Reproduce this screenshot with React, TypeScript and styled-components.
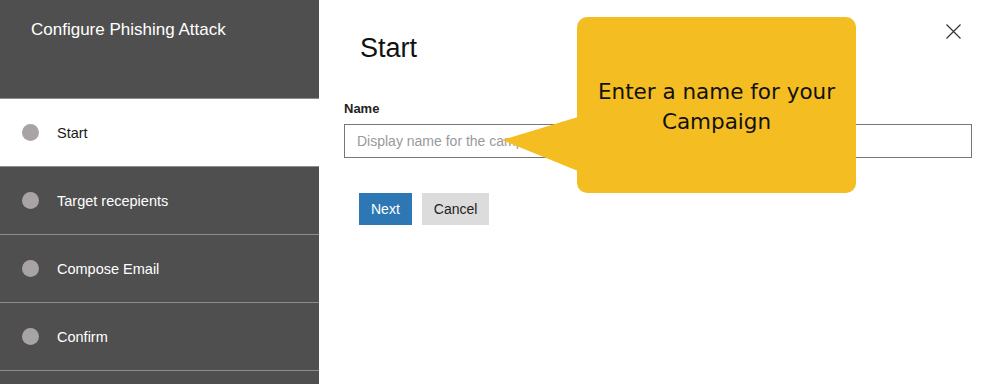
import React from "react";
import styled, { createGlobalStyle } from "styled-components";

const Global = createGlobalStyle`
  html, body { margin: 0; padding: 0; background: #ffffff; }
  body { font-family: "Liberation Sans", Arial, sans-serif; }
  * { box-sizing: border-box; }
`;

const Page = styled.div`
  position: relative;
  width: 981px;
  height: 384px;
  display: flex;
  overflow: hidden;
`;

const Sidebar = styled.aside`
  width: 319px;
  flex: none;
  background: #4f4f4f;
  display: flex;
  flex-direction: column;
  overflow: hidden;
`;

const SideHeader = styled.div`
  flex: none;
  height: 98px;
  padding: 20px 0 0 31px;
  color: #ffffff;
  font-size: 17px;
`;

const Step = styled.div<{ $active?: boolean }>`
  flex: none;
  height: 68px;
  border-top: 1px solid #8c8c8c;
  display: flex;
  align-items: center;
  padding-left: 22px;
  gap: 18px;
  background: ${(p) => (p.$active ? "#ffffff" : "transparent")};
  color: ${(p) => (p.$active ? "#1a1a1a" : "#ffffff")};
  font-size: 14.5px;
`;

const Dot = styled.span`
  width: 17px;
  height: 17px;
  border-radius: 50%;
  background: #a8a4a5;
  flex: none;
`;

const Main = styled.main`
  flex: 1;
  padding: 33px 9px 0 25px;
  display: flex;
  flex-direction: column;
`;

const TopRow = styled.div`
  display: flex;
  justify-content: space-between;
  align-items: flex-start;
`;

const Heading = styled.h1`
  margin: 0 0 0 16px;
  font-weight: normal;
  font-size: 27px;
  color: #111111;
  line-height: 30px;
`;

const CloseButton = styled.button`
  border: none;
  background: none;
  padding: 0;
  margin: -9px 11px 0 0;
  width: 15px;
  height: 15px;
  display: flex;
`;

const Label = styled.label`
  margin-top: 38px;
  font-weight: bold;
  font-size: 13px;
  color: #222222;
`;

const Input = styled.input`
  margin-top: 8px;
  height: 34px;
  width: 628px;
  border: 1px solid #767676;
  padding: 0 12px;
  font-family: "Liberation Sans", Arial, sans-serif;
  font-size: 14px;
  outline: none;
  &::placeholder { color: #9a9a9a; }
`;

const Actions = styled.div`
  display: flex;
  gap: 10px;
  margin: 35px 0 0 15px;
`;

const Button = styled.button<{ $primary?: boolean }>`
  height: 32px;
  border: none;
  padding: 0 12px;
  font-family: "Liberation Sans", Arial, sans-serif;
  font-size: 14px;
  background: ${(p) => (p.$primary ? "#2e77b5" : "#dcdcdc")};
  color: ${(p) => (p.$primary ? "#ffffff" : "#222222")};
`;

const Callout = styled.div`
  position: absolute;
  left: 577px;
  top: 17px;
  width: 279px;
  height: 176px;
  background: #f4bd21;
  border-radius: 10px;
  display: flex;
  align-items: center;
  justify-content: center;
  text-align: center;
  padding: 4px 0 0;
  font-family: "DejaVu Sans", Tahoma, sans-serif;
  font-size: 21.5px;
  line-height: 30px;
  color: #111111;
`;

const Tail = styled.svg`
  position: absolute;
  left: 502px;
  top: 117px;
`;

export default function App() {
  return (
    <>
      <Global />
      <Page>
        <Sidebar>
          <SideHeader>Configure Phishing Attack</SideHeader>
          <Step $active>
            <Dot />
            Start
          </Step>
          <Step>
            <Dot />
            Target recepients
          </Step>
          <Step>
            <Dot />
            Compose Email
          </Step>
          <Step>
            <Dot />
            Confirm
          </Step>
          <Step />
        </Sidebar>
        <Main>
          <TopRow>
            <Heading>Start</Heading>
            <CloseButton aria-label="Close">
              <svg width="15" height="15" viewBox="0 0 15 15">
                <path d="M0.5 0.5 L14.5 14.5 M14.5 0.5 L0.5 14.5" stroke="#333" strokeWidth="1.2" />
              </svg>
            </CloseButton>
          </TopRow>
          <Label>Name</Label>
          <Input placeholder="Display name for the campaign" />
          <Actions>
            <Button $primary>Next</Button>
            <Button>Cancel</Button>
          </Actions>
        </Main>
        <Tail width="76" height="54" viewBox="0 0 76 54">
          <polygon points="76,0 0,23 76,54" fill="#f4bd21" />
        </Tail>
        <Callout>
          Enter a name for your
          <br />
          Campaign
        </Callout>
      </Page>
    </>
  );
}
